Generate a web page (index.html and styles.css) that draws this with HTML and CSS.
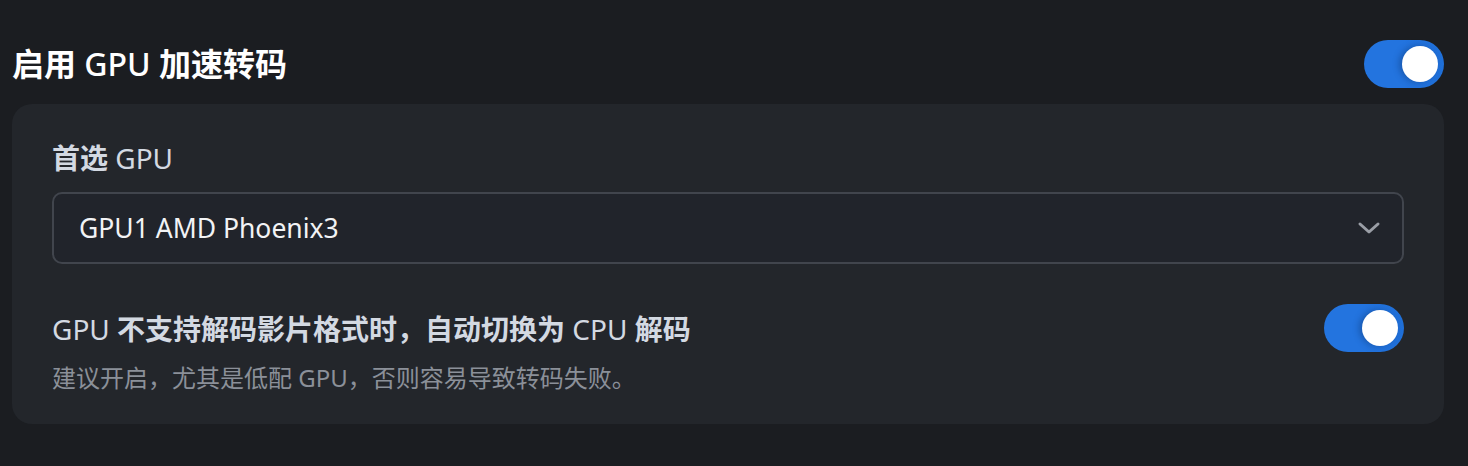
FILE: index.html
```html
<!DOCTYPE html>
<html lang="zh-CN">
<head>
  <meta charset="UTF-8" />
  <title>GPU 加速转码</title>
  <link rel="stylesheet" href="styles.css">
</head>
<body>
  <section class="setting">
    <div class="setting-head">
      <h2 class="setting-title">启用 <span class="latin">GPU</span> 加速转码</h2>
      <label class="switch">
        <input type="checkbox" checked />
        <span class="slider"></span>
      </label>
    </div>

    <div class="panel">
      <div class="field">
        <div class="field-label">首选 <span class="latin">GPU</span></div>
        <div class="select">
          <span class="select-value">GPU1 AMD Phoenix3</span>
          <svg class="chevron" viewBox="0 0 24 24" aria-hidden="true">
            <path d="M3 8l9 8 9-8" />
          </svg>
        </div>
      </div>

      <div class="option">
        <div class="option-text">
          <div class="field-label"><span class="latin">GPU</span> 不支持解码影片格式时，自动切换为 <span class="latin">CPU</span> 解码</div>
          <div class="option-desc">建议开启，尤其是低配 GPU，否则容易导致转码失败。</div>
        </div>
        <label class="switch">
          <input type="checkbox" checked />
          <span class="slider"></span>
        </label>
      </div>
    </div>
  </section>
</body>
</html>
```

FILE: styles.css
```css
*, *::before, *::after {
  box-sizing: border-box;
}

body {
  margin: 0;
  background: #1b1d21;
  font-family: "Noto Sans", "Noto Sans CJK SC", sans-serif;
  color: #fff;
}

.setting {
  padding: 40px 24px 0 12px;
}

.setting-head {
  display: flex;
  align-items: center;
  justify-content: space-between;
  height: 48px;
  margin-bottom: 16px;
}

.setting-title {
  margin: 0;
  font-size: 32px;
  font-weight: 700;
  color: #fff;
  line-height: 48px;
}

.setting-title .latin {
  font-weight: 500;
}

/* Toggle */
.switch {
  position: relative;
  display: inline-block;
  width: 80px;
  height: 48px;
  flex-shrink: 0;
}

.switch input {
  display: none;
}

.slider {
  position: absolute;
  inset: 0;
  border-radius: 24px;
  background: linear-gradient(90deg, #2374df 50%, #1f6fd8 100%);
}

.slider::before {
  content: "";
  position: absolute;
  top: 6px;
  left: 38px;
  width: 36px;
  height: 36px;
  border-radius: 50%;
  background: #fff;
  box-shadow: -3px 0 6px rgba(10, 40, 90, 0.35);
}

/* Panel */
.panel {
  background: #23262b;
  border-radius: 20px;
  padding: 36px 40px 30px;
}

.field-label {
  font-size: 28px;
  font-weight: 700;
  color: #d3d9e2;
  line-height: 36px;
}

.field-label .latin {
  font-weight: 400;
}

.select {
  display: flex;
  align-items: center;
  justify-content: space-between;
  margin-top: 16px;
  height: 72px;
  padding: 0 21px 0 25px;
  background: #21242b;
  border: 2px solid #41454d;
  border-radius: 10px;
}

.select-value {
  font-size: 26.5px;
  color: #f2f3f5;
}

.chevron {
  width: 24px;
  height: 24px;
  fill: none;
  stroke: #9a9ea6;
  stroke-width: 3;
  stroke-linecap: round;
  stroke-linejoin: round;
}

.option {
  display: flex;
  align-items: flex-start;
  justify-content: space-between;
  margin-top: 40px;
}

.option-text {
  padding-top: 7px;
}

.option-desc {
  margin-top: 15px;
  font-size: 24px;
  color: #8b9099;
  line-height: 32px;
}
```
